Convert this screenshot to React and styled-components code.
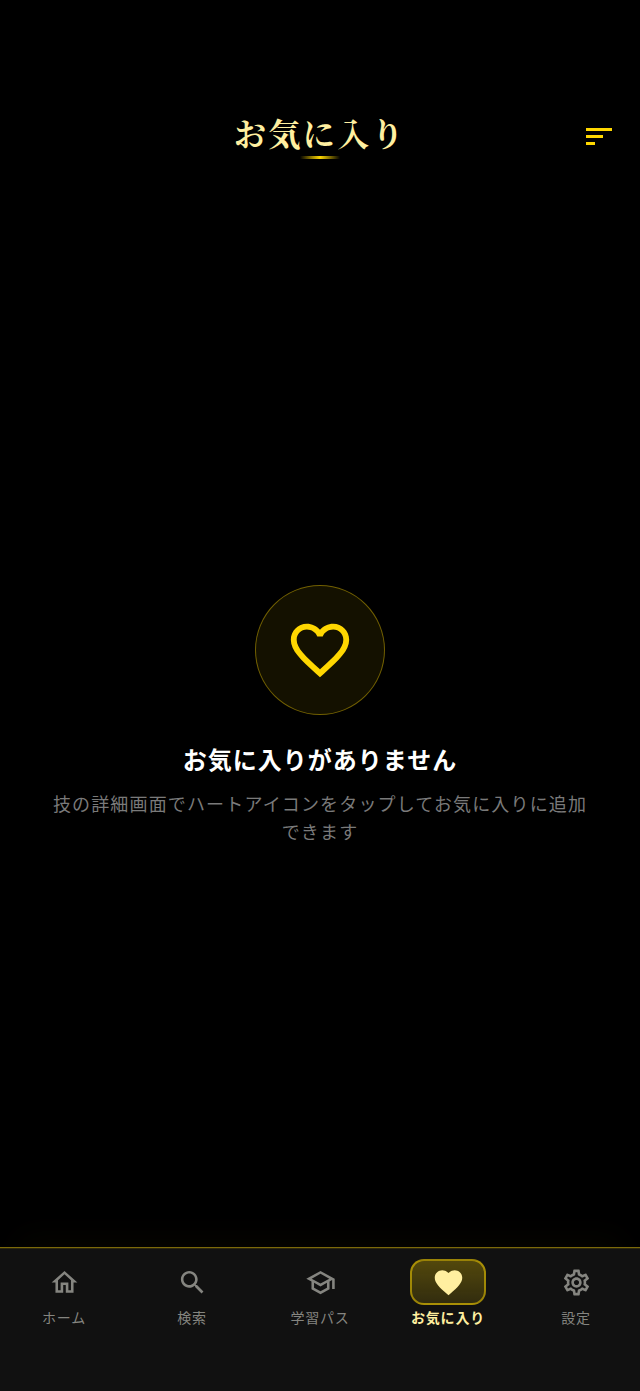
import React from "react";
import styled, { createGlobalStyle } from "styled-components";

const Global = createGlobalStyle`
  html, body { margin: 0; padding: 0; background: #000; }
  body { font-family: "Noto Sans CJK JP", sans-serif; }
`;

const Page = styled.div`
  width: 640px;
  height: 1391px;
  display: flex;
  flex-direction: column;
  background: #000;
  overflow: hidden;
`;

const Header = styled.header`
  height: 183px;
  flex: none;
  box-sizing: border-box;
  padding: 110px 28px 0;
  display: grid;
  grid-template-columns: 26px 1fr 26px;
  align-items: start;
`;

const TitleBlock = styled.div`
  grid-column: 2;
  display: flex;
  flex-direction: column;
  align-items: center;
  gap: 2px;
`;

const Title = styled.h1`
  margin: 0;
  font-family: "Noto Serif CJK JP", "Noto Sans CJK JP", serif;
  font-size: 32px;
  line-height: 44px;
  font-weight: 700;
  letter-spacing: 2.4px;
  color: #ffefa0;
`;

const Underline = styled.div`
  width: 40px;
  height: 3px;
  background: linear-gradient(90deg, transparent, #ffd700, transparent);
`;

const MenuButton = styled.div`
  grid-column: 3;
  margin-top: 18px;
  display: flex;
  flex-direction: column;
  gap: 4px;
`;

const MenuBar = styled.span`
  display: block;
  height: 3px;
  width: ${(p) => p.$w}px;
  background: #ffd700;
`;

const Main = styled.main`
  flex: 1;
  display: flex;
  flex-direction: column;
  align-items: center;
  justify-content: center;
  padding: 0 48px;
`;

const IconCircle = styled.div`
  width: 130px;
  height: 130px;
  box-sizing: border-box;
  border-radius: 50%;
  border: 1px solid rgba(255, 215, 0, 0.4);
  background: rgba(255, 215, 0, 0.08);
  display: flex;
  align-items: center;
  justify-content: center;
  margin-bottom: 23px;
  color: #ffd700;
`;

const EmptyTitle = styled.h2`
  margin: 0 0 9px;
  font-size: 24px;
  line-height: 42px;
  font-weight: 700;
  letter-spacing: 1px;
  color: #fff;
`;

const EmptyText = styled.p`
  margin: 0;
  font-size: 18px;
  line-height: 28px;
  letter-spacing: 1.15px;
  color: #7a7a7a;
  text-align: center;
`;

const Nav = styled.nav`
  flex: none;
  height: 144px;
  box-sizing: border-box;
  border-top: 1px solid rgba(255, 215, 0, 0.45);
  background: #111;
  box-shadow: 0 -28px 32px -16px rgba(255, 215, 0, 0.025), inset 0 1px 0 rgba(255, 215, 0, 0.12);
  display: grid;
  grid-template-columns: repeat(5, 1fr);
  padding-top: 11px;
  align-items: start;
`;

const NavItem = styled.div`
  display: flex;
  flex-direction: column;
  align-items: center;
  gap: 2px;
  color: ${(p) => (p.$active ? "#ffefa0" : "#858580")};
`;

const IconWrap = styled.div`
  width: 76px;
  height: 46px;
  box-sizing: border-box;
  border-radius: 14px;
  display: flex;
  align-items: center;
  justify-content: center;
  border: 2px solid ${(p) => (p.$active ? "rgba(255,215,0,0.5)" : "transparent")};
  background: ${(p) =>
    p.$active
      ? "linear-gradient(180deg, rgba(255,215,0,0.28), rgba(255,215,0,0.14))"
      : "transparent"};
`;

const NavLabel = styled.span`
  font-size: 14px;
  line-height: 20px;
  letter-spacing: 0.8px;
  font-weight: ${(p) => (p.$active ? 700 : 400)};
`;

const Icon = ({ d, size }) => (
  <svg width={size} height={size} viewBox="0 0 24 24" fill="currentColor">
    <path d={d} />
  </svg>
);

const paths = {
  home: "M12 5.69l5 4.5V18h-2v-6H9v6H7v-7.81l5-4.5M12 3L2 12h3v8h6v-6h2v6h6v-8h3L12 3z",
  search:
    "M15.5 14h-.79l-.28-.27C15.41 12.59 16 11.11 16 9.5 16 5.91 13.09 3 9.5 3S3 5.91 3 9.5 5.91 16 9.5 16c1.61 0 3.09-.59 4.23-1.57l.27.28v.79l5 4.99L20.49 19l-4.99-5zm-6 0C7.01 14 5 11.99 5 9.5S7.01 5 9.5 5 14 7.01 14 9.5 11.99 14 9.5 14z",
  school:
    "M12 3L1 9l4 2.18v6L12 21l7-3.82v-6l2-1.09V17h2V9L12 3zm6.82 6L12 12.72 5.18 9 12 5.28 18.82 9zM17 15.99l-5 2.73-5-2.73v-3.72L12 15l5-2.73v3.72z",
  heart:
    "M12 21.35l-1.45-1.32C5.4 15.36 2 12.28 2 8.5 2 5.42 4.42 3 7.5 3c1.74 0 3.41.81 4.5 2.09C13.09 3.81 14.76 3 16.5 3 19.58 3 22 5.42 22 8.5c0 3.78-3.4 6.86-8.55 11.54L12 21.35z",
  heartOutline:
    "M16.5 3c-1.74 0-3.41.81-4.5 2.09C10.91 3.81 9.24 3 7.5 3 4.42 3 2 5.42 2 8.5c0 3.78 3.4 6.86 8.55 11.54L12 21.35l1.45-1.32C18.6 15.36 22 12.28 22 8.5 22 5.42 19.58 3 16.5 3zm-4.4 15.55l-.1.1-.1-.1C7.14 14.24 4 11.39 4 8.5 4 6.5 5.5 5 7.5 5c1.54 0 3.04.99 3.57 2.36h1.87C13.46 5.99 14.96 5 16.5 5c2 0 3.5 1.5 3.5 3.5 0 2.89-3.14 5.74-7.9 10.05z",
  settings:
    "M19.43 12.98c.04-.32.07-.64.07-.98 0-.34-.03-.66-.07-.98l2.11-1.65c.19-.15.24-.42.12-.64l-2-3.46c-.09-.16-.26-.25-.44-.25-.06 0-.12.01-.17.03l-2.49 1c-.52-.4-1.08-.73-1.69-.98l-.38-2.65C14.46 2.18 14.25 2 14 2h-4c-.25 0-.46.18-.49.42l-.38 2.65c-.61.25-1.17.59-1.69.98l-2.49-1c-.06-.02-.12-.03-.18-.03-.17 0-.34.09-.43.25l-2 3.46c-.13.22-.07.49.12.64l2.11 1.65c-.04.32-.07.65-.07.98 0 .33.03.66.07.98l-2.11 1.65c-.19.15-.24.42-.12.64l2 3.46c.09.16.26.25.44.25.06 0 .12-.01.17-.03l2.49-1c.52.4 1.08.73 1.69.98l.38 2.65c.03.24.24.42.49.42h4c.25 0 .46-.18.49-.42l.38-2.65c.61-.25 1.17-.59 1.69-.98l2.49 1c.06.02.12.03.18.03.17 0 .34-.09.43-.25l2-3.46c.12-.22.07-.49-.12-.64l-2.11-1.65zm-1.98-1.71c.04.31.05.52.05.73 0 .21-.02.43-.05.73l-.14 1.13.89.7 1.08.84-.7 1.21-1.27-.51-1.04-.42-.9.68c-.43.32-.84.56-1.25.73l-1.06.43-.16 1.13-.2 1.35h-1.4l-.19-1.35-.16-1.13-1.06-.43c-.43-.18-.83-.41-1.23-.71l-.91-.7-1.06.43-1.27.51-.7-1.21 1.08-.84.89-.7-.14-1.13c-.03-.31-.05-.54-.05-.74s.02-.43.05-.73l.14-1.13-.89-.7-1.08-.84.7-1.21 1.27.51 1.04.42.9-.68c.43-.32.84-.56 1.25-.73l1.06-.43.16-1.13.2-1.35h1.39l.19 1.35.16 1.13 1.06.43c.43.18.83.41 1.23.71l.91.7 1.06-.43 1.27-.51.7 1.21-1.07.85-.89.7.14 1.13zM12 8c-2.21 0-4 1.79-4 4s1.79 4 4 4 4-1.79 4-4-1.79-4-4-4zm0 6c-1.1 0-2-.9-2-2s.9-2 2-2 2 .9 2 2-.9 2-2 2z",
};

const items = [
  { label: "ホーム", icon: paths.home },
  { label: "検索", icon: paths.search },
  { label: "学習パス", icon: paths.school },
  { label: "お気に入り", icon: paths.heart, active: true },
  { label: "設定", icon: paths.settings },
];

export default function App() {
  return (
    <Page>
      <Global />
      <Header>
        <TitleBlock>
          <Title>お気に入り</Title>
          <Underline />
        </TitleBlock>
        <MenuButton>
          <MenuBar $w={26} />
          <MenuBar $w={17} />
          <MenuBar $w={9} />
        </MenuButton>
      </Header>
      <Main>
        <IconCircle>
          <Icon d={paths.heartOutline} size={70} />
        </IconCircle>
        <EmptyTitle>お気に入りがありません</EmptyTitle>
        <EmptyText>技の詳細画面でハートアイコンをタップしてお気に入りに追加できます</EmptyText>
      </Main>
      <Nav>
        {items.map((it) => (
          <NavItem key={it.label} $active={it.active}>
            <IconWrap $active={it.active}>
              <Icon d={it.icon} size={it.active ? 33 : 31} />
            </IconWrap>
            <NavLabel $active={it.active}>{it.label}</NavLabel>
          </NavItem>
        ))}
      </Nav>
    </Page>
  );
}
